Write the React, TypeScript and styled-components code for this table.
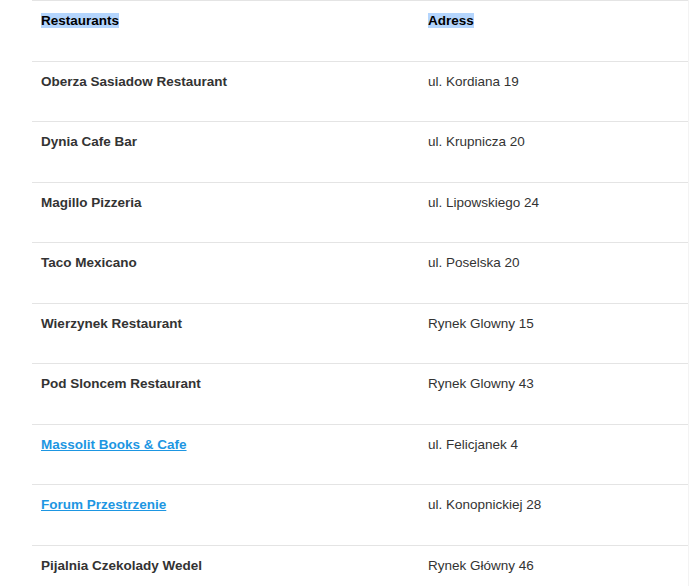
import React from 'react';
import styled, { createGlobalStyle } from 'styled-components';

const GlobalStyle = createGlobalStyle`
  body {
    margin: 0;
    background: #fff;
    font-family: 'Liberation Sans', Arial, Helvetica, sans-serif;
  }
`;

interface IPlace {
  name: string;
  address: string;
  link?: boolean;
}

const places: IPlace[] = [
  { name: 'Oberza Sasiadow Restaurant', address: 'ul. Kordiana 19' },
  { name: 'Dynia Cafe Bar', address: 'ul. Krupnicza 20' },
  { name: 'Magillo Pizzeria', address: 'ul. Lipowskiego 24' },
  { name: 'Taco Mexicano', address: 'ul. Poselska 20' },
  { name: 'Wierzynek Restaurant', address: 'Rynek Glowny 15' },
  { name: 'Pod Sloncem Restaurant', address: 'Rynek Glowny 43' },
  { name: 'Massolit Books & Cafe', address: 'ul. Felicjanek 4', link: true },
  { name: 'Forum Przestrzenie', address: 'ul. Konopnickiej 28', link: true },
  { name: 'Pijalnia Czekolady Wedel', address: 'Rynek Główny 46' },
];

const Page = styled.div`
  padding: 0 12px 0 32px;
  height: 586px;
  overflow: hidden;
`;

const Table = styled.div`
  width: 656px;
  border-right: 1px solid #f3f3f3;
`;

const Row = styled.div`
  display: grid;
  grid-template-columns: 387px 1fr;
  box-sizing: border-box;
  height: 60.5px;
  border-top: 1.5px solid #e4e4e4;
`;

const Cell = styled.div`
  padding: 12px 9px 0;
  font-size: 13.5px;
  line-height: 16px;
  color: #333;
`;

const HeadText = styled.span`
  font-weight: 700;
  color: #000;
  background: #b4d5fd;
`;

const Name = styled.span`
  font-weight: 700;
  color: #333;
`;

const NameLink = styled.a`
  font-weight: 700;
  color: #1d96e2;
  text-decoration: underline;
`;

export default function App() {
  return (
    <>
      <GlobalStyle />
      <Page>
        <Table>
          <Row>
            <Cell>
              <HeadText>Restaurants</HeadText>
            </Cell>
            <Cell>
              <HeadText>Adress</HeadText>
            </Cell>
          </Row>
          {places.map((p) => (
            <Row key={p.name}>
              <Cell>
                {p.link ? <NameLink href="#">{p.name}</NameLink> : <Name>{p.name}</Name>}
              </Cell>
              <Cell>{p.address}</Cell>
            </Row>
          ))}
        </Table>
      </Page>
    </>
  );
}
